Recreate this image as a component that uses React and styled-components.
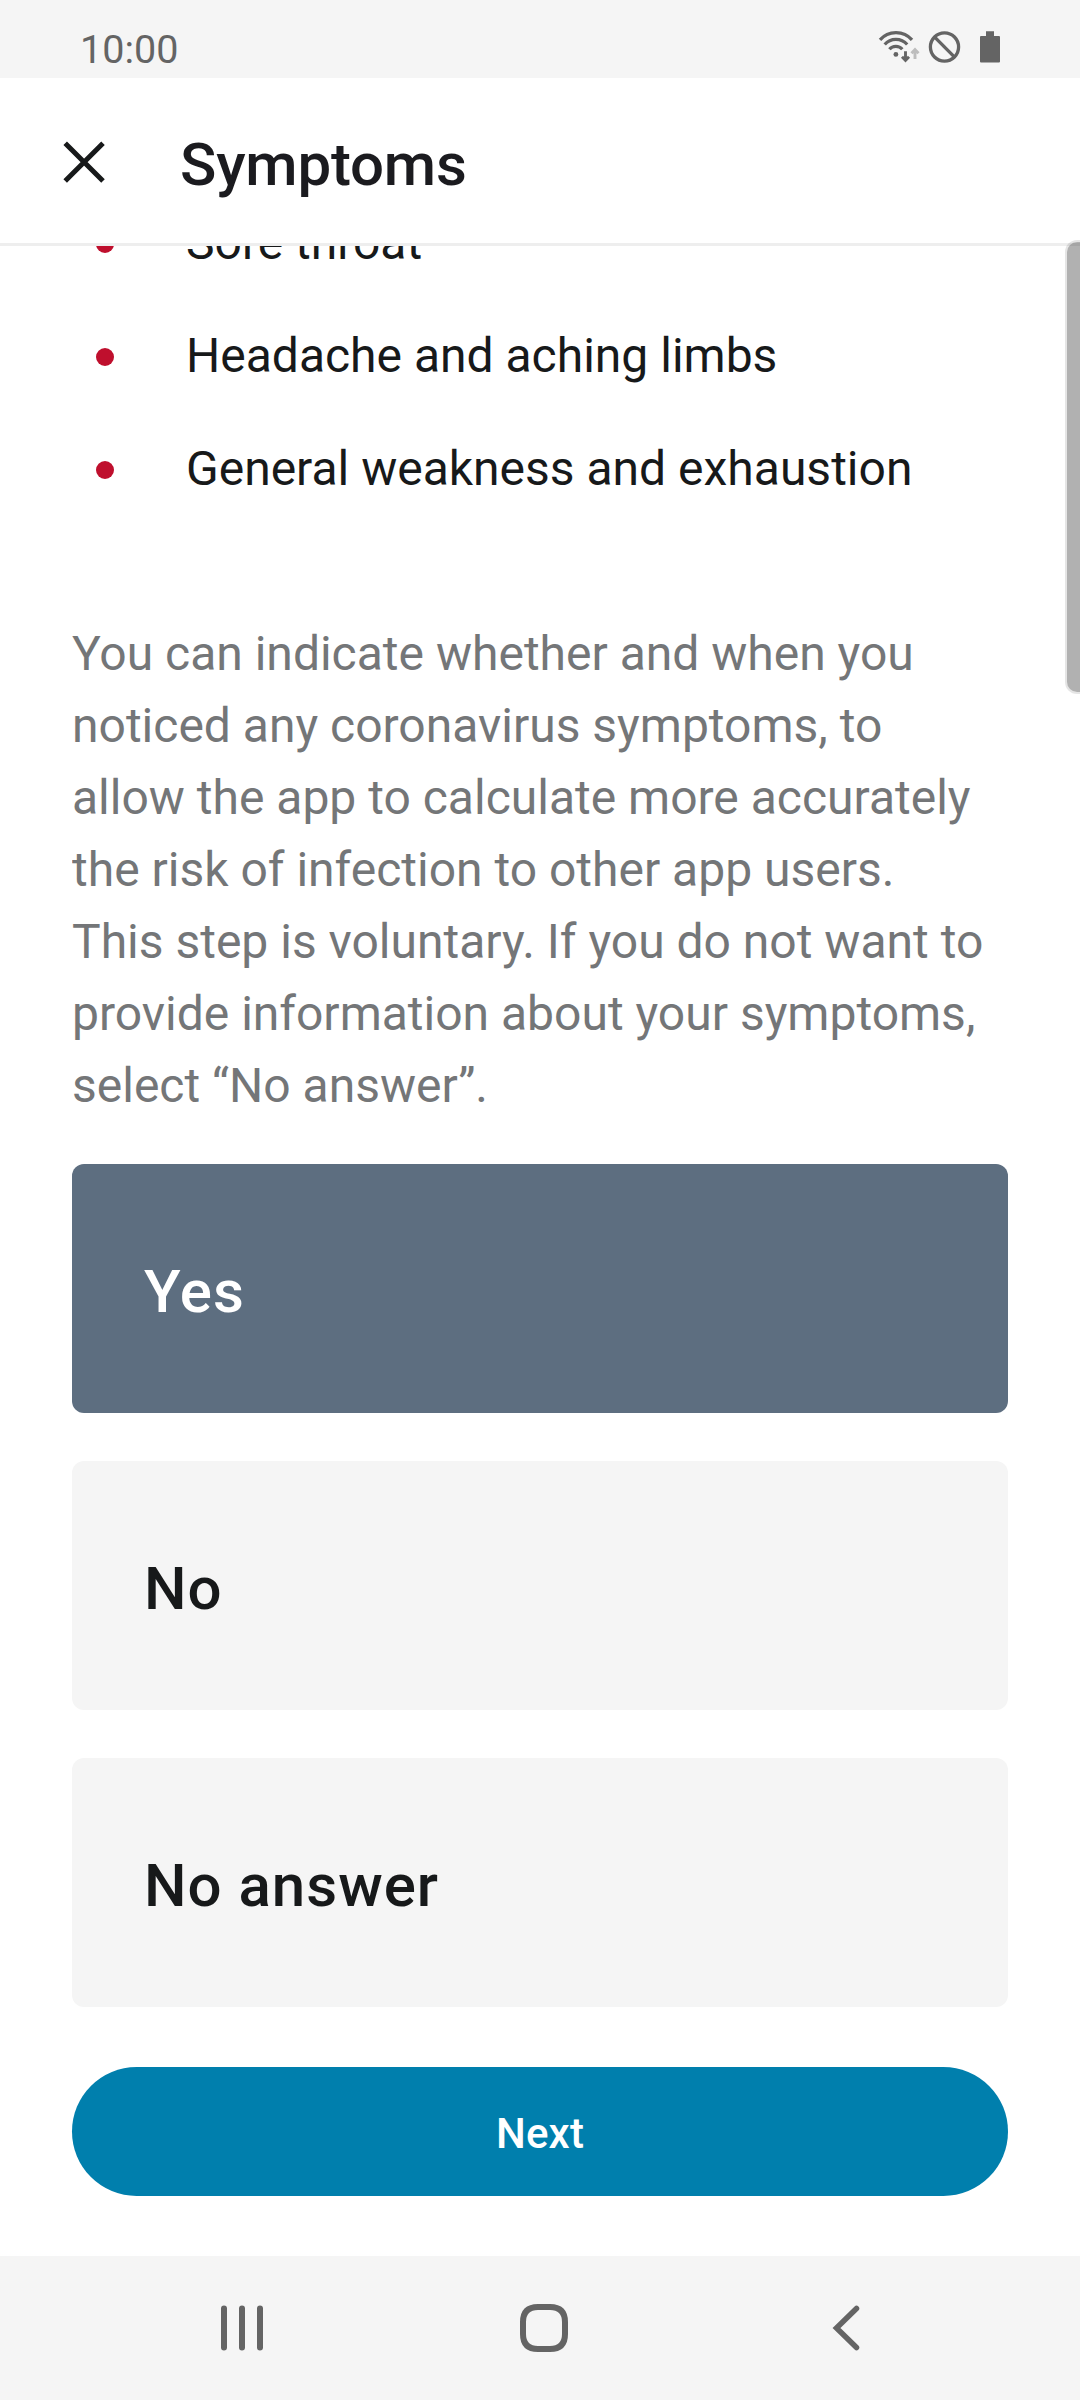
import React from "react";
import styled, { createGlobalStyle } from "styled-components";

const GlobalStyle = createGlobalStyle`
  *, *::before, *::after { box-sizing: border-box; }
  body { margin: 0; background: #fff; font-family: Roboto, "Noto Sans", sans-serif; }
`;

const Screen = styled.div`
  display: flex;
  flex-direction: column;
  width: 1080px;
  height: 2400px;
  background: #fff;
  color: #17191a;
  overflow: hidden;
`;

const StatusBar = styled.header`
  flex: none;
  display: flex;
  justify-content: space-between;
  height: 78px;
  padding: 0 80px 0 80px;
  background: #f5f5f5;
  color: #646464;
`;

const Clock = styled.time`
  padding-top: 27px;
  font-size: 39.5px;
  line-height: 46px;
`;

const StatusIcons = styled.div`
  display: flex;
  align-items: flex-start;
  padding-top: 30px;

  svg { display: block; }
  svg + svg { margin-left: 8px; }
  svg:last-child { margin-left: 19px; }
`;

const AppBar = styled.div`
  flex: none;
  display: flex;
  align-items: center;
  height: 168px;
  padding: 3px 0 0 60px;
  border-bottom: 3px solid #eee;
`;

const CloseButton = styled.button`
  display: flex;
  width: 48px;
  height: 48px;
  padding: 0;
  border: 0;
  background: none;
  color: #17191a;
`;

const Title = styled.h1`
  margin: 5px 0 0 72px;
  color: #1b1b1f;
  font-size: 60px;
  font-weight: 500;
  line-height: 72px;
  letter-spacing: -0.2px;
`;

const Viewport = styled.main`
  position: relative;
  flex: none;
  display: flex;
  flex-direction: column;
  justify-content: flex-end;
  height: 1761px;
  padding: 0 72px;
`;

const Clip = styled.div`
  flex: 1;
  min-height: 0;
  display: flex;
  flex-direction: column;
  justify-content: flex-end;
  overflow: hidden;
`;

const SymptomList = styled.ul`
  flex: none;
  display: flex;
  flex-direction: column;
  gap: 41px;
  margin: 0 0 113px;
  padding: 0 0 0 24px;
  list-style: none;
`;

const Symptom = styled.li`
  display: flex;
  align-items: center;
  font-size: 48px;
  line-height: 72px;

  &::before {
    content: "";
    width: 18px;
    height: 18px;
    margin: 2px 72px 0 0;
    border-radius: 50%;
    background: #bf0f2d;
  }
`;

const Explanation = styled.p`
  flex: none;
  margin: 0 0 42px;
  padding-right: 12px;
  color: #747678;
  font-size: 48px;
  line-height: 72px;
`;

const Options = styled.div`
  flex: none;
  display: flex;
  flex-direction: column;
  gap: 48px;
`;

const Option = styled.button`
  display: flex;
  align-items: center;
  height: 249px;
  padding: 6px 72px 0;
  border: 0;
  border-radius: 12px;
  background: ${(p) => (p.$selected ? "#5d6e80" : "#f5f5f5")};
  color: ${(p) => (p.$selected ? "#fff" : "#17191a")};
  font: 500 60px/72px Roboto, "Noto Sans", sans-serif;
  letter-spacing: 1px;
  text-align: left;
`;

const ScrollThumb = styled.div`
  position: absolute;
  top: -6px;
  right: 0;
  width: 15px;
  height: 454px;
  border: 2px solid rgba(0, 0, 0, 0.1);
  border-right: 0;
  border-radius: 12px 0 0 12px;
  background: rgba(0, 0, 0, 0.305);
  background-clip: padding-box;
`;

const Footer = styled.footer`
  flex: 1;
  padding: 60px 72px;
`;

const NextButton = styled.button`
  display: block;
  width: 100%;
  height: 129px;
  padding: 4px 0 0;
  border: 0;
  border-radius: 65px;
  background: #007fad;
  color: #fff;
  font: 500 42px/50px Roboto, "Noto Sans", sans-serif;
  letter-spacing: 0.2px;
`;

const NavBar = styled.nav`
  flex: none;
  display: flex;
  align-items: center;
  height: 144px;
  padding: 0 220px 0 218px;
  justify-content: space-between;
  background: #f5f5f5;
  color: #646464;

  svg { display: block; }
`;

const WifiIcon = () => (
  <svg width="42" height="33" viewBox="0 0 42 33" fill="none" stroke="#646464">
    <path d="M2 9.9C10.2 .1 25.800 .1 34 9.900" strokeWidth="3.200" />
    <path d="M6.700 14.500C12.600 7.700 23.200 7.700 29.200 14.500" strokeWidth="3.200" />
    <path d="M11.400 19.300C14.700 15.300 21 15.300 24.300 19.300" strokeWidth="3.200" />
    <circle cx="17.900" cy="24.400" r="2.400" fill="#646464" stroke="none" />
    <path d="M27.500 21.300V31M24 26.800L27.500 30.500L31 26.800" strokeWidth="2.900" />
    <path d="M37 29V19M33.500 23.300L37 19.600L40.500 23.300" strokeWidth="2.900" stroke="#bdbdbd" />
  </svg>
);

const BlockedIcon = () => (
  <svg width="33" height="34" viewBox="0 0 33 34" fill="none" stroke="#646464" strokeWidth="3.300">
    <circle cx="16.500" cy="17" r="14.100" />
    <path d="M6.700 7.200L26.300 26.800" />
  </svg>
);

const BatteryIcon = () => (
  <svg width="20" height="34" viewBox="0 0 20 34" fill="#646464">
    <path d="M6 1.300h8V6h5a1 1 0 0 1 1 1v24.600a1 1 0 0 1-1 1H1a1 1 0 0 1-1-1V7a1 1 0 0 1 1-1h5z" />
  </svg>
);

const CloseIcon = () => (
  <svg width="48" height="48" viewBox="0 0 48 48" fill="none" stroke="currentColor" strokeWidth="5">
    <path d="M5.200 5.200L43 43M43 5.200L5.200 43" />
  </svg>
);

const RecentsIcon = () => (
  <svg width="48" height="48" viewBox="0 0 48 48" stroke="currentColor" strokeWidth="6" strokeLinecap="round">
    <path d="M6 4.500V43.500M24 4.500V43.500M42 4.500V43.500" />
  </svg>
);

const HomeIcon = () => (
  <svg width="48" height="48" viewBox="0 0 48 48" fill="none" stroke="currentColor" strokeWidth="6">
    <path d="M18 3H30C40 3 45 8 45 18V30C45 40 40 45 30 45H18C8 45 3 40 3 30V18C3 8 8 3 18 3Z" />
  </svg>
);

const BackIcon = () => (
  <svg width="38" height="48" viewBox="-4 0 38 48" fill="none" stroke="currentColor" strokeWidth="5.500" strokeLinecap="round">
    <path d="M30.500 4.500L10.500 24L30.500 43.500" />
  </svg>
);

const symptoms = ["Sore throat", "Headache and aching limbs", "General weakness and exhaustion"];
const answers = ["Yes", "No", "No answer"];

export default function App() {
  return (
    <Screen>
      <GlobalStyle />
      <StatusBar>
        <Clock>10:00</Clock>
        <StatusIcons>
          <WifiIcon />
          <BlockedIcon />
          <BatteryIcon />
        </StatusIcons>
      </StatusBar>
      <AppBar>
        <CloseButton aria-label="Close">
          <CloseIcon />
        </CloseButton>
        <Title>Symptoms</Title>
      </AppBar>
      <Viewport>
        <Clip>
          <SymptomList>
            {symptoms.map((s) => (
              <Symptom key={s}>{s}</Symptom>
            ))}
          </SymptomList>
          <Explanation>
            You can indicate whether and when you noticed any coronavirus symptoms, to allow the app to
            calculate more accurately the risk of infection to other app users.
            <br />
            This step is voluntary. If you do not want to provide information about your symptoms, select
            “No answer”.
          </Explanation>
        </Clip>
        <Options>
          {answers.map((a, i) => (
            <Option key={a} $selected={i === 0}>
              {a}
            </Option>
          ))}
        </Options>
        <ScrollThumb />
      </Viewport>
      <Footer>
        <NextButton>Next</NextButton>
      </Footer>
      <NavBar>
        <RecentsIcon />
        <HomeIcon />
        <BackIcon />
      </NavBar>
    </Screen>
  );
}
